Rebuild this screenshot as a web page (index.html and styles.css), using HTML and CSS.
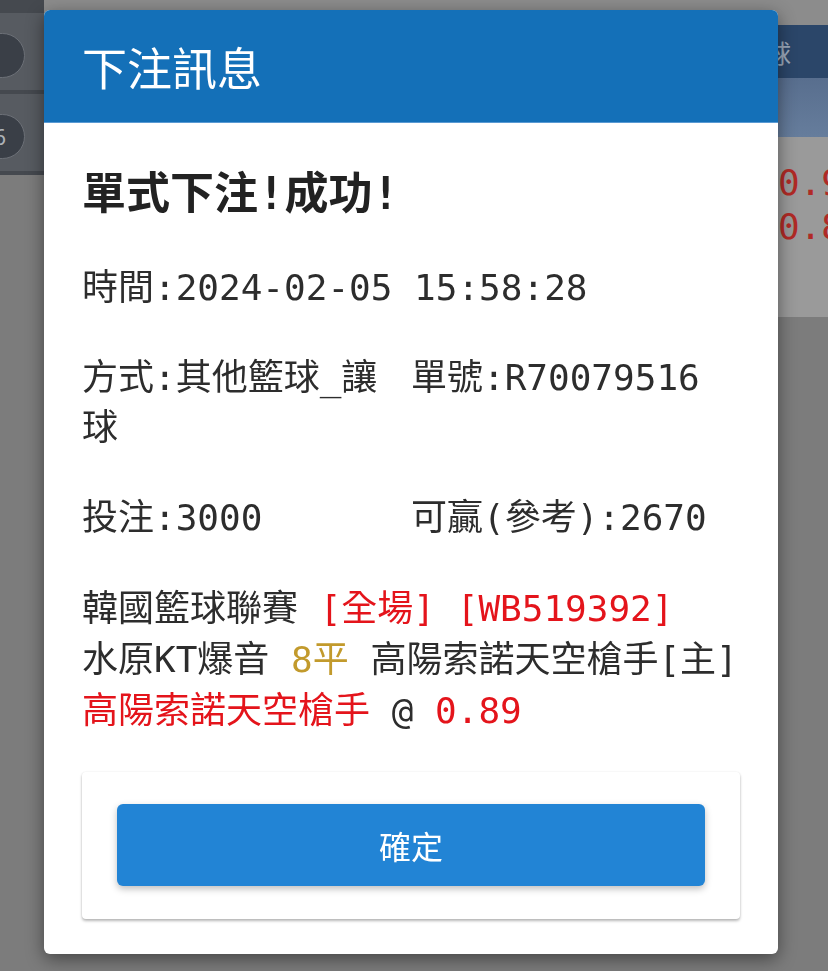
FILE: index.html
```html
<!DOCTYPE html>
<html lang="zh-Hant">
<head>
    <meta charset="UTF-8">
    <meta name="viewport" content="width=device-width, initial-scale=1.0">
    <title>下注訊息</title>
    <link rel="stylesheet" href="styles.css">
</head>
<body>
    <div class="page">
        <aside class="side">
            <div class="side-row"><span class="pill"></span></div>
            <div class="side-row"><span class="pill">26</span></div>
        </aside>
        <main class="board">
            <div class="board-head"><span>讓球</span></div>
            <div class="board-sub"></div>
            <div class="board-rows">
                <span></span><span class="odds">0.91</span>
                <span></span><span class="odds">0.89</span>
            </div>
        </main>
    </div>

    <div class="modal">
        <div class="modal-header">
            <h3>下注訊息</h3>
        </div>
        <div class="modal-body">
            <h4 class="result">單式下注!成功!</h4>
            <p>時間:2024-02-05 15:58:28</p>
            <div class="pair">
                <p>方式:其他籃球_讓球</p>
                <p>單號:R70079516</p>
            </div>
            <div class="pair">
                <p>投注:3000</p>
                <p>可贏(參考):2670</p>
            </div>
            <div class="match">
                <div>韓國籃球聯賽 <span class="red">[全場] [WB519392]</span></div>
                <div>水原KT爆音 <span class="gold">8平</span> 高陽索諾天空槍手[主]</div>
                <div><span class="red">高陽索諾天空槍手</span> @ <span class="red">0.89</span></div>
            </div>
            <div class="actions">
                <button class="btn-ok">確定</button>
            </div>
        </div>
    </div>
</body>
</html>
```

FILE: styles.css
```css
body {
    margin: 0;
    height: 971px;
    overflow: hidden;
    background: #7c7c7c;
    font-family: "DejaVu Sans Mono", "Noto Sans CJK TC", monospace;
}

/* page behind the dialog */
.page { display: flex; align-items: flex-start; }
.side {
    width: 44px;
    flex: none;
    background: #575b61;
    border-top: 13px solid #45494f;
    overflow: hidden;
}
.side-row {
    height: 81px;
    padding-top: 20px;
    box-sizing: border-box;
    border-bottom: 4px solid #45494f;
}
.pill {
    display: block;
    width: 64px;
    height: 45px;
    margin-left: -39px;
    padding-right: 18px;
    box-sizing: border-box;
    border-radius: 23px;
    background: #3a3f47;
    border: 1px solid #6c7077;
    color: #aeb2b8;
    font: 22px/43px "Noto Sans", sans-serif;
    text-align: right;
}
.board { flex: 1; border-top: 25px solid #8c8c8c; }
.board-head {
    height: 53px;
    background: #2b4669;
    color: #9aa8ba;
    font: 25px "Noto Sans CJK TC", sans-serif;
    display: flex;
    justify-content: flex-end;
    align-items: center;
    padding-right: 37px;
}
.board-sub { height: 59px; background: linear-gradient(#586e8e, #667d9c); }
.board-rows {
    height: 180px;
    box-sizing: border-box;
    padding-top: 24px;
    background: #9a9a9a;
    display: grid;
    grid-template-columns: 1fr 50px;
    align-content: start;
}
.odds { color: #b02a26; font-size: 36px; line-height: 44px; white-space: nowrap; }

/* dialog */
.modal {
    position: fixed;
    top: 10px;
    left: 44px;
    width: 734px;
    background: #fff;
    border-radius: 6px;
    overflow: hidden;
    box-shadow: 0 5px 18px rgba(0, 0, 0, 0.45);
}
.modal-header {
    height: 113px;
    box-sizing: border-box;
    padding: 0 38px;
    display: flex;
    align-items: center;
    background: #1470b8;
    border-bottom: 1px solid #5a9ad3;
}
.modal-header h3 {
    margin: 0;
    color: #fff;
    font: 400 45px/1 "Noto Sans CJK TC", sans-serif;
}
.modal-body {
    padding: 42px 38px 35px;
    color: #2d2d2d;
    font-size: 36px;
    line-height: 50px;
}
.result {
    margin: 0 0 40px;
    font-size: 44px;
    line-height: 58px;
    font-weight: bold;
    color: #222;
}
.modal-body p { margin: 0 0 40px; }
.pair { display: grid; grid-template-columns: 1fr 1fr; margin-bottom: 40px; }
.pair p { margin: 0; }
.match { line-height: 51px; white-space: nowrap; margin: 1px 0 36px; }
.red { color: #e4141b; }
.gold { color: #c29a2c; }
.actions {
    padding: 32px 35px 33px;
    border-radius: 4px;
    box-shadow: 0 2px 3px rgba(0, 0, 0, 0.28), 0 0 2px rgba(0, 0, 0, 0.08);
}
.btn-ok {
    display: block;
    width: 100%;
    height: 82px;
    border: 0;
    border-radius: 6px;
    background: #2284d5;
    color: #fff;
    font: 32px "Noto Sans CJK TC", sans-serif;
    box-shadow: 0 3px 7px rgba(0, 0, 0, 0.25);
}
```
